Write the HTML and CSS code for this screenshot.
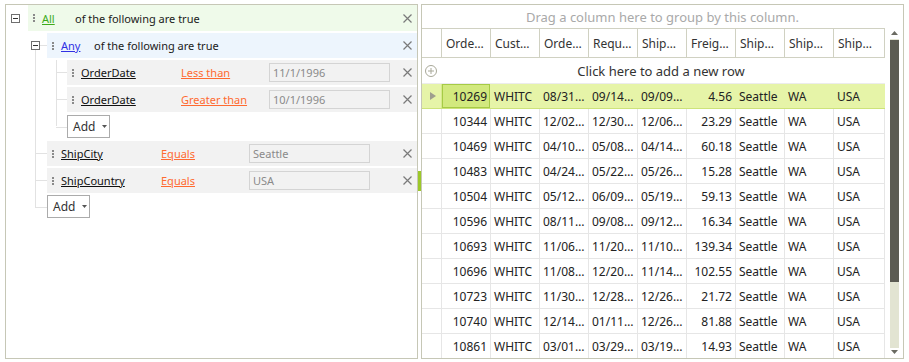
FILE: index.html
```html
<!DOCTYPE html>
<html>
<head>
<meta charset="utf-8">
<link rel="stylesheet" href="styles.css">
</head>
<body>
<div class="app">
  <div class="filter">
    <div class="node first">
      <div class="gutter g0"><span class="toggle"></span></div>
      <div class="row grp all">
        <svg class="grip" width="2" height="8" viewBox="0 0 2 8"><rect y="0" width="2" height="2"/><rect y="3" width="2" height="2"/><rect y="6" width="2" height="2"/></svg>
        <a class="lnk all-link">All</a>
        <span class="label">of the following are true</span>
        <svg class="close" width="9" height="9" viewBox="0 0 9 9"><path d="M0.5 0.5L8.5 8.5M8.5 0.5L0.5 8.5"/></svg>
      </div>
    </div>
    <div class="children c1">
      <div class="node">
        <div class="gutter g1 branch"><span class="toggle"></span></div>
        <div class="row grp any">
          <svg class="grip" width="2" height="8" viewBox="0 0 2 8"><rect y="0" width="2" height="2"/><rect y="3" width="2" height="2"/><rect y="6" width="2" height="2"/></svg>
          <a class="lnk any-link">Any</a>
          <span class="label">of the following are true</span>
          <svg class="close" width="9" height="9" viewBox="0 0 9 9"><path d="M0.5 0.5L8.5 8.5M8.5 0.5L0.5 8.5"/></svg>
        </div>
      </div>
      <div class="children c2">
        <div class="node">
          <div class="gutter g2 branch"></div>
          <div class="row field">
            <svg class="grip" width="2" height="8" viewBox="0 0 2 8"><rect y="0" width="2" height="2"/><rect y="3" width="2" height="2"/><rect y="6" width="2" height="2"/></svg>
            <a class="lnk fld">OrderDate</a>
            <a class="lnk oper">Less than</a>
            <span class="val">11/1/1996</span>
            <svg class="close" width="9" height="9" viewBox="0 0 9 9"><path d="M0.5 0.5L8.5 8.5M8.5 0.5L0.5 8.5"/></svg>
          </div>
        </div>
        <div class="node">
          <div class="gutter g2 branch"></div>
          <div class="row field">
            <svg class="grip" width="2" height="8" viewBox="0 0 2 8"><rect y="0" width="2" height="2"/><rect y="3" width="2" height="2"/><rect y="6" width="2" height="2"/></svg>
            <a class="lnk fld">OrderDate</a>
            <a class="lnk oper">Greater than</a>
            <span class="val">10/1/1996</span>
            <svg class="close" width="9" height="9" viewBox="0 0 9 9"><path d="M0.5 0.5L8.5 8.5M8.5 0.5L0.5 8.5"/></svg>
          </div>
        </div>
        <div class="node addnode">
          <div class="gutter g2 branch"></div>
          <div class="add">Add<svg class="caret" width="5" height="3" viewBox="0 0 5 3"><path d="M0 0H5L2.5 3Z"/></svg></div>
        </div>
      </div>
      <div class="node after-add">
        <div class="gutter g1 branch"></div>
        <div class="row field">
          <svg class="grip" width="2" height="8" viewBox="0 0 2 8"><rect y="0" width="2" height="2"/><rect y="3" width="2" height="2"/><rect y="6" width="2" height="2"/></svg>
          <a class="lnk fld">ShipCity</a>
          <a class="lnk oper">Equals</a>
          <span class="val">Seattle</span>
          <svg class="close" width="9" height="9" viewBox="0 0 9 9"><path d="M0.5 0.5L8.5 8.5M8.5 0.5L0.5 8.5"/></svg>
        </div>
      </div>
      <div class="node">
        <div class="gutter g1 branch"></div>
        <div class="row field">
          <svg class="grip" width="2" height="8" viewBox="0 0 2 8"><rect y="0" width="2" height="2"/><rect y="3" width="2" height="2"/><rect y="6" width="2" height="2"/></svg>
          <a class="lnk fld">ShipCountry</a>
          <a class="lnk oper">Equals</a>
          <span class="val">USA</span>
          <svg class="close" width="9" height="9" viewBox="0 0 9 9"><path d="M0.5 0.5L8.5 8.5M8.5 0.5L0.5 8.5"/></svg>
        </div>
      </div>
      <div class="node addnode">
        <div class="gutter g1 branch"></div>
        <div class="add">Add<svg class="caret" width="5" height="3" viewBox="0 0 5 3"><path d="M0 0H5L2.5 3Z"/></svg></div>
      </div>
    </div>
  </div>

  <div class="splitter"><div class="split-grip"></div></div>

  <div class="grid">
    <div class="group-panel">Drag a column here to group by this column.</div>
    <div class="grid-main">
      <div class="table">
        <div class="hdr">
          <div class="hc"></div>
          <div class="hc">Orde…</div>
          <div class="hc">Cust…</div>
          <div class="hc">Orde…</div>
          <div class="hc">Requ…</div>
          <div class="hc">Ship…</div>
          <div class="hc">Freig…</div>
          <div class="hc">Ship…</div>
          <div class="hc">Ship…</div>
          <div class="hc">Ship…</div>
        </div>
        <div class="newrow">
          <svg class="plus" width="12" height="12" viewBox="0 0 12 12"><circle cx="6" cy="6" r="5.5"/><path d="M3 6H9M6 3V9"/></svg>
          <span class="newrow-text">Click here to add a new row</span>
        </div>
        <div class="dr sel">
          <div class="ind"><svg width="6" height="8" viewBox="0 0 6 8"><path d="M0 0L6 4L0 8Z"/></svg></div>
          <div class="c num cur">10269</div><div class="c">WHITC</div><div class="c">08/31…</div><div class="c">09/14…</div><div class="c">09/09…</div><div class="c num">4.56</div><div class="c">Seattle</div><div class="c">WA</div><div class="c">USA</div>
        </div>
        <div class="dr">
          <div class="ind"></div>
          <div class="c num">10344</div><div class="c">WHITC</div><div class="c">12/02…</div><div class="c">12/30…</div><div class="c">12/06…</div><div class="c num">23.29</div><div class="c">Seattle</div><div class="c">WA</div><div class="c">USA</div>
        </div>
        <div class="dr">
          <div class="ind"></div>
          <div class="c num">10469</div><div class="c">WHITC</div><div class="c">04/10…</div><div class="c">05/08…</div><div class="c">04/14…</div><div class="c num">60.18</div><div class="c">Seattle</div><div class="c">WA</div><div class="c">USA</div>
        </div>
        <div class="dr">
          <div class="ind"></div>
          <div class="c num">10483</div><div class="c">WHITC</div><div class="c">04/24…</div><div class="c">05/22…</div><div class="c">05/26…</div><div class="c num">15.28</div><div class="c">Seattle</div><div class="c">WA</div><div class="c">USA</div>
        </div>
        <div class="dr">
          <div class="ind"></div>
          <div class="c num">10504</div><div class="c">WHITC</div><div class="c">05/12…</div><div class="c">06/09…</div><div class="c">05/19…</div><div class="c num">59.13</div><div class="c">Seattle</div><div class="c">WA</div><div class="c">USA</div>
        </div>
        <div class="dr">
          <div class="ind"></div>
          <div class="c num">10596</div><div class="c">WHITC</div><div class="c">08/11…</div><div class="c">09/08…</div><div class="c">09/12…</div><div class="c num">16.34</div><div class="c">Seattle</div><div class="c">WA</div><div class="c">USA</div>
        </div>
        <div class="dr">
          <div class="ind"></div>
          <div class="c num">10693</div><div class="c">WHITC</div><div class="c">11/06…</div><div class="c">11/20…</div><div class="c">11/10…</div><div class="c num">139.34</div><div class="c">Seattle</div><div class="c">WA</div><div class="c">USA</div>
        </div>
        <div class="dr">
          <div class="ind"></div>
          <div class="c num">10696</div><div class="c">WHITC</div><div class="c">11/08…</div><div class="c">12/20…</div><div class="c">11/14…</div><div class="c num">102.55</div><div class="c">Seattle</div><div class="c">WA</div><div class="c">USA</div>
        </div>
        <div class="dr">
          <div class="ind"></div>
          <div class="c num">10723</div><div class="c">WHITC</div><div class="c">11/30…</div><div class="c">12/28…</div><div class="c">12/26…</div><div class="c num">21.72</div><div class="c">Seattle</div><div class="c">WA</div><div class="c">USA</div>
        </div>
        <div class="dr">
          <div class="ind"></div>
          <div class="c num">10740</div><div class="c">WHITC</div><div class="c">12/14…</div><div class="c">01/11…</div><div class="c">12/26…</div><div class="c num">81.88</div><div class="c">Seattle</div><div class="c">WA</div><div class="c">USA</div>
        </div>
        <div class="dr">
          <div class="ind"></div>
          <div class="c num">10861</div><div class="c">WHITC</div><div class="c">03/01…</div><div class="c">03/29…</div><div class="c">03/19…</div><div class="c num">14.93</div><div class="c">Seattle</div><div class="c">WA</div><div class="c">USA</div>
        </div>
      </div>
      <div class="scrollbar">
        <svg class="arrow up" width="7" height="4" viewBox="0 0 7 4"><path d="M0 4L3.5 0L7 4Z"/></svg>
        <div class="track"><div class="thumb"></div></div>
        <svg class="arrow down" width="7" height="4" viewBox="0 0 7 4"><path d="M0 0L3.5 4L7 0Z"/></svg>
      </div>
    </div>
  </div>
</div>
</body>
</html>
```

FILE: styles.css
```css
* { box-sizing: border-box; }
html, body { margin: 0; padding: 0; background: #fff; }
body {
  font-family: "Noto Sans", "Open Sans", sans-serif;
  font-size: 12px;
  color: #222;
}
.app {
  display: flex;
  padding: 4px 0 0 5px;
  height: 362px;
  overflow: hidden;
}

/* ---------- filter panel ---------- */
.filter {
  width: 413px;
  height: 355px;
  flex: none;
  border: 1px solid #c6c7b6;
  font-size: 11px;
}
.node { display: flex; margin-top: 2px; position: relative; }
.node.first { margin-top: 0; }
.node.addnode { margin-top: 3px; }
.node.after-add { margin-top: 3px; }
.c1 > .node.addnode { margin-top: 2px; }
.gutter { flex: none; position: relative; display: flex; align-items: center; }
.g0 { width: 22px; padding-left: 5px; }
.g1 { width: 19px; padding-left: 3px; }
.g2 { width: 20px; }
.branch::after {
  content: "";
  position: absolute;
  right: 0;
  top: 12px;
  border-top: 1px solid #e2e2e2;
}
.g1.branch::after { left: 7px; }
.g2.branch::after { left: 9px; }
.toggle {
  position: relative;
  z-index: 1;
  width: 9px;
  height: 9px;
  border: 1px solid #6f6f6f;
  background: #fff;
}
.toggle::after {
  content: "";
  position: absolute;
  left: 1px;
  top: 3px;
  width: 5px;
  height: 1px;
  background: #333;
}
.children { position: relative; }
.children::before {
  content: "";
  position: absolute;
  border-left: 1px solid #e2e2e2;
}
.c1 { margin-left: 22px; }
.c1::before { left: 7px; top: 15px; bottom: 11px; }
.c2 { margin-left: 19px; }
.c2::before { left: 9px; top: 0; bottom: 12px; }

.row {
  flex: 1;
  height: 25px;
  display: flex;
  align-items: center;
  padding-left: 5px;
  white-space: nowrap;
}
.row.all { height: 26px; background: #effaea; }
.row.any { background: #edf5fd; }
.row.field { background: #f2f2f2; }
.grip { flex: none; fill: #8a8a8a; margin-right: 7px; }
.lnk { text-decoration: underline; cursor: pointer; flex: none; }
.all-link { width: 33px; color: #3daa1b; }
.any-link { width: 33px; color: #3030e4; }
.fld { width: 100px; color: #111; }
.oper { width: 88px; color: #ff6a30; }
.label { color: #1a1a1a; }
.val {
  flex: none;
  width: 121px;
  height: 19px;
  border: 1px solid #d4d4d4;
  background: #f2f2f2;
  color: #8a8a8a;
  padding-left: 3px;
  line-height: 17px;
}
.close {
  flex: none;
  margin-left: auto;
  margin-right: 5px;
  stroke: #7a7a7a;
  stroke-width: 1.2;
  fill: none;
}
.add {
  flex: none;
  width: 43px;
  height: 23px;
  border: 1px solid #ababab;
  background: #fff;
  display: flex;
  align-items: center;
  padding-left: 5px;
  color: #333;
  font-size: 12px;
}
.caret { fill: #555; margin-left: 7px; }

/* ---------- splitter ---------- */
.splitter { width: 3px; flex: none; }
.split-grip { margin-top: 167px; width: 3px; height: 20px; background: #9cc82a; }

/* ---------- grid ---------- */
.grid {
  width: 483px;
  height: 355px;
  flex: none;
  border: 1px solid #c6c7b6;
  overflow: hidden;
  display: flex;
  flex-direction: column;
}
.group-panel {
  height: 23px;
  flex: none;
  display: flex;
  align-items: center;
  justify-content: center;
  color: #a9a9a9;
  font-size: 13px;
}
.grid-main { display: flex; flex: 1; min-height: 0; }
.table { width: 463px; flex: none; }
.hdr, .dr {
  display: grid;
  grid-template-columns: 20px 49px 49px 49px 49px 49px 49px 49px 49px 51px;
}
.hdr {
  height: 30px;
  border-top: 1px solid #d0d1c2;
  border-bottom: 1px solid #d0d1c2;
}
.hc {
  border-right: 1px solid #d0d1c2;
  display: flex;
  align-items: center;
  padding: 0 3px 0 4px;
  white-space: nowrap;
  overflow: hidden;
  color: #333;
}
.newrow {
  height: 26px;
  display: flex;
  align-items: center;
  border-bottom: 1px solid #ececec;
  position: relative;
}
.plus { flex: none; margin-left: 3px; fill: none; stroke: #a8a898; stroke-width: 1; }
.newrow-text { flex: 1; text-align: center; color: #333; font-size: 13px; }
.dr { height: 25px; border-bottom: 1px solid #e6e6e6; }
.ind, .c {
  border-right: 1px solid #e6e6e6;
  display: flex;
  align-items: center;
  white-space: nowrap;
  overflow: hidden;
}
.c { padding: 0 3px; color: #222; }
.c.num { justify-content: flex-end; padding-right: 3px; }
.ind { justify-content: flex-start; padding-left: 8px; }
.ind svg { fill: #9e9e8e; }
.dr.sel { background: #e6f4a8; border-bottom-color: #cde37a; }
.dr.sel .c { border-right-color: #e6f4a8; }
.dr.sel .ind { border-right-color: #d6ea8c; }
.c.cur { background: #d2e97e; box-shadow: inset 0 0 0 1px #a6cb45; }

/* ---------- scrollbar ---------- */
.scrollbar {
  width: 18px;
  flex: none;
  display: flex;
  flex-direction: column;
  align-items: center;
}
.arrow { fill: #6a6a62; flex: none; }
.arrow.up { margin-top: 3px; }
.track {
  margin-top: 4px;
  width: 9px;
  height: 309px;
  background: #e2e4d2;
  flex: none;
  padding-top: 1px;
}
.thumb { width: 9px; height: 242px; background: #5b5b53; }
.arrow.down { margin-top: 2px; }
```
